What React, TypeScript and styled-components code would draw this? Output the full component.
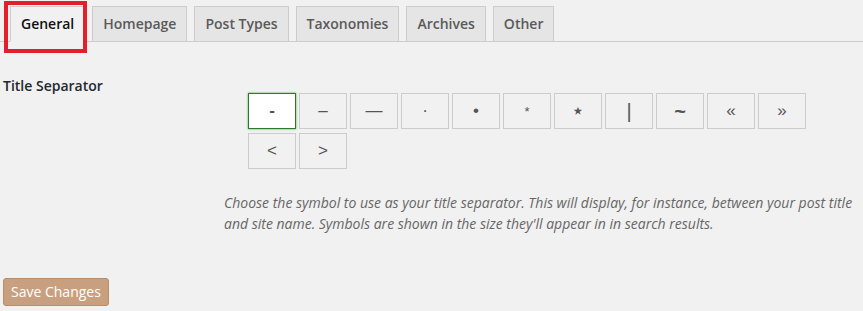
import React from "react";
import styled, { createGlobalStyle } from "styled-components";

const tabs = ["General", "Homepage", "Post Types", "Taxonomies", "Archives", "Other"];
const separators: { glyph: string; size?: number; bold?: boolean }[] = [
  { glyph: "-", bold: true },
  { glyph: "–" },
  { glyph: "—" },
  { glyph: "·" },
  { glyph: "•" },
  { glyph: "*", size: 13 },
  { glyph: "⋆", size: 22 },
  { glyph: "|", size: 20 },
  { glyph: "~", size: 20, bold: true },
  { glyph: "«" },
  { glyph: "»" },
  { glyph: "<" },
  { glyph: ">" },
];

const App = () => {
  return (
    <Page>
      <GlobalStyle />
      <TabBar>
        {tabs.map((t, i) => (
          <Tab key={t} active={i === 0}>
            {t}
          </Tab>
        ))}
      </TabBar>
      <FormRow>
        <Label>Title Separator</Label>
        <Field>
          <SeparatorGrid>
            {separators.map((s, i) => (
              <SepButton key={s.glyph} selected={i === 0} size={s.size} bold={s.bold}>
                {s.glyph}
              </SepButton>
            ))}
          </SeparatorGrid>
          <Description>
            Choose the symbol to use as your title separator. This will display, for instance, between
            your post title and site name. Symbols are shown in the size they'll appear in in search
            results.
          </Description>
        </Field>
      </FormRow>
      <SaveButton>Save Changes</SaveButton>
    </Page>
  );
};

export default App;

// ****  STYLED COMPONENTS  ****

const GlobalStyle = createGlobalStyle`
  html, body {
    margin: 0;
    padding: 0;
    background: #f1f1f1;
  }
  body {
    font-family: "Open Sans", "Noto Sans", sans-serif;
    color: #444;
  }
`;

const Page = styled.div`
  width: 863px;
  height: 311px;
  padding-left: 3px;
  box-sizing: border-box;
  overflow: hidden;
`;

const TabBar = styled.div`
  display: flex;
  padding-top: 6px;
  border-bottom: 1px solid #ccc;
  margin-left: -3px;
  padding-left: 3px;
`;

const Tab = styled.div<{ active?: boolean }>`
  position: relative;
  margin-left: 7px;
  margin-bottom: -1px;
  padding: 5px 10px;
  font-size: 14px;
  line-height: 24px;
  font-weight: 600;
  color: ${(p) => (p.active ? "#111" : "#5a5a5a")};
  background: ${(p) => (p.active ? "#f1f1f1" : "#e5e5e5")};
  border: 1px solid #ccc;
  border-bottom-color: ${(p) => (p.active ? "#f1f1f1" : "#ccc")};
  white-space: nowrap;

  ${(p) =>
    p.active &&
    `
    &::after {
      content: "";
      position: absolute;
      left: -7px;
      top: -6px;
      right: -3px;
      bottom: -12px;
      border: 4px solid #e3202a;
    }
  `}
`;

const FormRow = styled.div`
  display: flex;
  margin-top: 34px;
`;

const Label = styled.div`
  width: 221px;
  flex-shrink: 0;
  font-size: 14px;
  line-height: 20px;
  font-weight: 600;
  color: #23282d;
`;

const Field = styled.div`
  display: flex;
  flex-direction: column;
`;

const SeparatorGrid = styled.div`
  display: grid;
  grid-template-columns: repeat(11, 48px);
  grid-auto-rows: 36px;
  gap: 4px 3px;
  margin-top: 17px;
  margin-left: 24px;
`;

const SepButton = styled.div<{ selected?: boolean; size?: number; bold?: boolean }>`
  display: flex;
  align-items: center;
  justify-content: center;
  box-sizing: border-box;
  font-family: "Liberation Sans", "DejaVu Sans", sans-serif;
  font-size: ${(p) => p.size ?? 17}px;
  color: #555;
  font-weight: ${(p) => (p.bold ? 700 : 400)};
  background: ${(p) => (p.selected ? "#fff" : "#f1f1f1")};
  border: 1px solid ${(p) => (p.selected ? "#2b7a2b" : "#ccc")};
  box-shadow: ${(p) => (p.selected ? "0 0 2px rgba(40, 160, 40, 0.8)" : "none")};
`;

const Description = styled.p`
  width: 632px;
  margin: 23px 0 0;
  font-size: 14px;
  line-height: 21px;
  font-style: italic;
  color: #666;
`;

const SaveButton = styled.button`
  display: block;
  margin-top: 44px;
  height: 28px;
  padding: 0 7px;
  font-family: "Open Sans", "Noto Sans", sans-serif;
  font-size: 14px;
  line-height: 26px;
  color: #fff;
  background: #c9a07f;
  border: 1px solid #b88d6a;
  border-radius: 3px;
  cursor: pointer;
`;
